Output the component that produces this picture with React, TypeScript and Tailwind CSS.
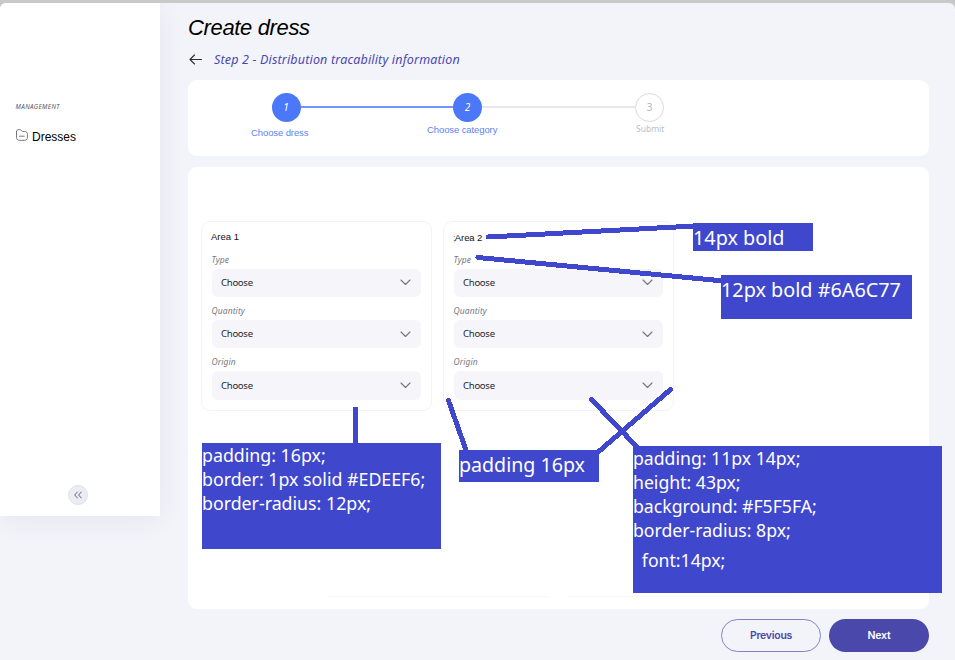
import React from "react";

const sans = "font-['Liberation_Sans',Arial,sans-serif]";
const noto = "font-['Noto_Sans',sans-serif]";

function Field({ label }: { label: string }) {
  return (
    <div className="h-[51.4px]">
      <div className={`-ml-[0.5px] h-[17px] pt-[2px] text-[8.5px] leading-[12px] tracking-[0.1px] italic text-[#777983] ${noto}`}>{label}</div>
      <div className="flex h-[28.500px] items-center justify-between rounded-[6px] bg-[#f5f5fa] pl-[9px] pr-[10px]">
        <span className={`text-[9.5px] leading-[14px] tracking-[-0.25px] text-[#25262c] ${noto}`}>Choose</span>
        <svg width="11" height="7" viewBox="0 0 11 7" fill="none" stroke="#73757f" strokeWidth="1.1" strokeLinecap="round" strokeLinejoin="round">
          <path d="M1 1l4.500 4.500L10 1" />
        </svg>
      </div>
    </div>
  );
}

function AreaCard({ title }: { title: React.ReactNode }) {
  return (
    <section className="h-[190px] w-[231px] rounded-[9px] border border-[#f3f3f6] bg-white px-[10px] pt-[8px]">
      <div className={`flex h-[21.600px] items-start text-[9.5px] leading-[14px] text-[#111] ${sans}`}>{title}</div>
      <Field label="Type" />
      <Field label="Quantity" />
      <Field label="Origin" />
    </section>
  );
}

function Note({ box, lines, text }: { box: string; lines: string[]; text: string }) {
  return (
    <div className={`absolute bg-[#3f48cc] text-white whitespace-nowrap ${noto} ${box}`}>
      {lines.map((l) => (
        <div key={l} className={`origin-left ${text}`}>{l}</div>
      ))}
    </div>
  );
}

export default function App() {
  return (
    <div className="relative h-[660px] w-[955px] overflow-hidden bg-[#c9c9ca] pt-[3px]">
      <div className="flex h-[657px] overflow-hidden rounded-t-[6px] bg-[#f3f4fa]">
        <aside className="flex h-[513px] w-[160px] flex-col bg-white shadow-[0_4px_24px_rgba(60,60,90,0.07)]">
          <div className={`pt-[98px] pl-[15.5px] text-[6.3px] leading-[12px] tracking-[0.4px] italic text-[#555761] ${noto}`}>MANAGEMENT</div>
          <div className="flex items-center pt-[16px] pl-[16px]">
            <svg width="12" height="12" viewBox="0 0 12 12" fill="none" stroke="#666973" strokeWidth="0.9" strokeLinecap="round" strokeLinejoin="round" className="-mt-[4px]">
              <path d="M.5 3C.5 1.3 1.200.6 2.800.6h1c.7 0 1 .2 1.400.7l.6.8c.2.3.5.4.9.4h1.700c2 0 3 .9 3 2.800v3c0 2-1 3-3 3H3.500c-2 0-3-1-3-3V3z" />
              <path d="M3.500 7.200h4.800" />
            </svg>
            <span className={`ml-[4px] text-[12px] leading-[16px] text-black ${sans}`}>Dresses</span>
          </div>
          <button className="mt-auto mb-[11px] ml-[68px] flex h-[20px] w-[20px] items-center justify-center rounded-full border border-[#e1e1ea] bg-[#ececf4]">
            <svg width="8" height="8" viewBox="0 0 8 8" fill="none" stroke="#62646e" strokeWidth="1" strokeLinecap="round" strokeLinejoin="round">
              <path d="M3.400 1L.7 4l2.700 3M7.300 1L4.600 4l2.700 3" />
            </svg>
          </button>
        </aside>

        <main className="flex w-[769px] flex-col pl-[28px]">
          <h1 className={`pt-[11px] text-[22px] leading-[28px] tracking-[-0.35px] italic text-black ${sans}`}>Create dress</h1>
          <div className="mt-[7px] flex h-[20px] items-center">
            <svg width="14" height="11" viewBox="0 0 14 11" fill="none" stroke="#2c2d35" strokeWidth="1.1" strokeLinecap="round" strokeLinejoin="round" className="ml-px">
              <path d="M5.500 1L1 5.500 5.500 10M1 5.500h11.500" />
            </svg>
            <span className={`ml-[11px] mt-[2px] whitespace-nowrap text-[12.500px] leading-[18px] italic text-[#4a48ad] tracking-[0.17px] ${noto}`}>Step 2 - Distribution tracability information</span>
          </div>

          <section className="mt-[11px] h-[75.500px] w-[741px] shrink-0 rounded-[9px] bg-white pt-[13px]">
            <div className="ml-[83.500px] flex items-center">
              <div className={`flex h-[29px] w-[29px] items-center justify-center rounded-full bg-[#4b78f8] text-[10px] italic text-white ${noto}`}>1</div>
              <div className="-mt-[1px] h-[2px] w-[152.500px] bg-[#7195fb]" />
              <div className={`flex h-[29px] w-[29px] items-center justify-center rounded-full bg-[#4b78f8] text-[10px] italic text-white ${noto}`}>2</div>
              <div className="-mt-[1px] h-[2px] w-[153px] bg-[#e6e6ee]" />
              <div className={`flex h-[29px] w-[29px] items-center justify-center rounded-full border border-[#d9d9e1] text-[10px] text-[#b5b5bb] ${noto}`}>3</div>
            </div>
            <div className="flex text-[9.5px] leading-[12px] text-[#5b83f5]">
              <span className={`ml-[63px] mt-[5px] w-[176px] tracking-[-0.1px] ${sans}`}>Choose dress</span>
              <span className={`mt-[2px] w-[209px] tracking-[-0.1px] ${sans}`}>Choose category</span>
              <span className={`mt-px text-[8.5px] text-[#bcbec6] ${noto}`}>Submit</span>
            </div>
          </section>

          <section className="mt-[11.500px] flex h-[441.500px] w-[741px] shrink-0 flex-col rounded-[9px] bg-white pt-[54px]">
            <div className="flex gap-[11px] pl-[13px]">
              <AreaCard title={<span className="-ml-px">Area 1</span>} />
              <AreaCard title={<span className="-ml-px pt-px tracking-[-0.1px]"><span className="text-[#777] tracking-[-0.8px]">;</span>Area 2</span>} />
            </div>
            <div className="mt-auto mb-[12px] ml-[140px] flex gap-[20px]">
              <div className="h-px w-[221px] bg-[#f8f8fa]" />
              <div className="h-px w-[221px] bg-[#f8f8fa]" />
            </div>
          </section>

          <div className="mt-[10.500px] flex w-[741px] justify-end gap-[8px] font-['Inter',sans-serif] text-[10.5px] font-semibold tracking-[-0.25px]">
            <button className="h-[33px] w-[100px] rounded-full border border-[#8382c7] text-[#4a48aa]">Previous</button>
            <button className="h-[33px] w-[100px] rounded-full bg-[#4a48aa] text-white">Next</button>
          </div>
        </main>
      </div>

      <svg className="absolute left-0 top-0" width="955" height="660" fill="none" stroke="#3f48cc" strokeWidth="5" strokeLinecap="round" shapeRendering="crispEdges">
        <path d="M488.500 237L695 226" />
        <path d="M478 257.500L724 281" />
        <path d="M355.500 409V445" />
        <path d="M448.500 400.500L467 453" />
        <path d="M670.500 389.500L597 453" />
        <path d="M591.500 399.500L638 448" />
      </svg>

      <Note box="left-[693px] top-[223px] h-[28px] w-[120px]" text="pt-[3px] text-[20px] leading-[24px] scale-x-[0.99]" lines={["14px bold"]} />
      <Note box="left-[721px] top-[275px] h-[44px] w-[191px]" text="pt-[3px] text-[20px] leading-[24px] scale-x-[0.99]" lines={["12px bold #6A6C77"]} />
      <Note box="left-[202px] top-[443px] h-[106px] w-[239px]" text="text-[18px] leading-[24px] scale-x-[0.987]" lines={["padding: 16px;", "border: 1px solid #EDEEF6;", "border-radius: 12px;"]} />
      <Note box="left-[459px] top-[450px] h-[32px] w-[140px]" text="pt-[3px] text-[20px] leading-[24px] scale-x-[0.98]" lines={["padding 16px"]} />
      <Note box="left-[633px] top-[446px] h-[147px] w-[309px]" text="text-[18px] leading-[24px] scale-x-[0.98] last:mt-[6px] last:pl-[9px]" lines={["padding: 11px 14px;", "height: 43px;", "background: #F5F5FA;", "border-radius: 8px;", "font:14px;"]} />
    </div>
  );
}
